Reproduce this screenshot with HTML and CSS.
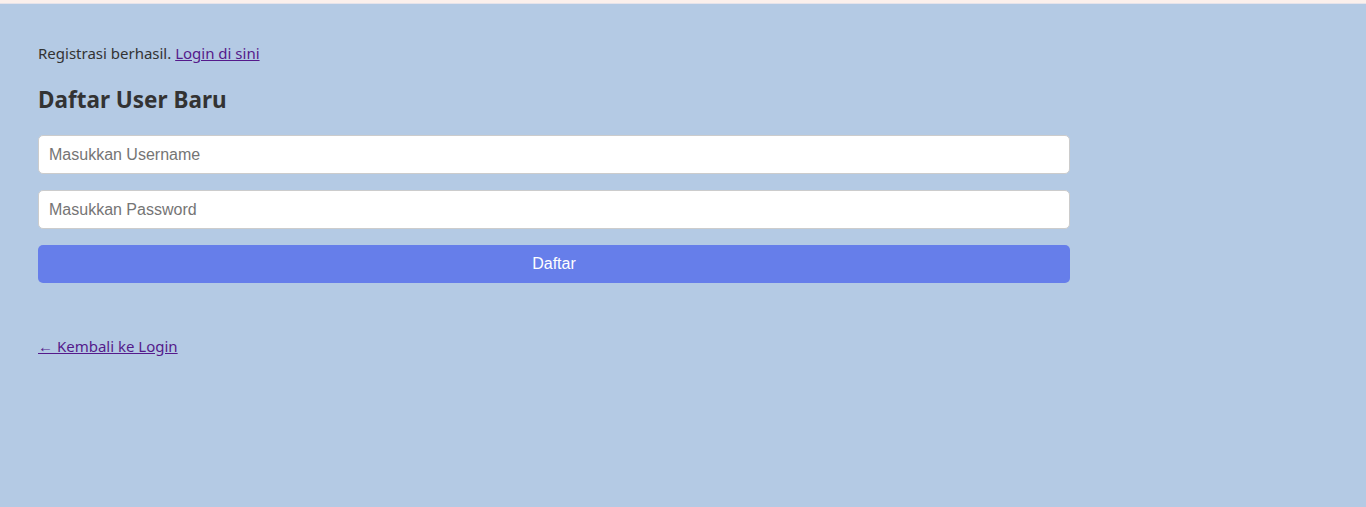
FILE: index.html
```html
<!DOCTYPE html>
<html lang="id">
<head>
<meta charset="utf-8">
<title>Daftar User Baru</title>
<link rel="stylesheet" href="styles.css">
</head>
<body>
<div class="strip"></div>
<main class="page">
  <p class="notice">Registrasi berhasil. <a href="#" class="visited">Login di sini</a></p>
  <h2 class="title">Daftar User Baru</h2>
  <form class="form">
    <input class="field" type="text" placeholder="Masukkan Username">
    <input class="field" type="password" placeholder="Masukkan Password">
    <button class="submit" type="button">Daftar</button>
  </form>
  <a href="#" class="visited back">← Kembali ke Login</a>
</main>
</body>
</html>
```
FILE: styles.css
```css
html, body {
  margin: 0;
  padding: 0;
  height: 100%;
}
body {
  background: #b4cae4;
  font-family: "Noto Sans", "Open Sans", sans-serif;
  color: #333333;
}
.strip {
  height: 3px;
  background: #fbf0ec;
  border-bottom: 1px solid #e6e3ea;
}
.page {
  padding: 39px 38px 0;
}
.notice {
  margin: 0;
  font-size: 15px;
  line-height: 20px;
}
.visited {
  color: #551a8b;
}
.title {
  margin: 23px 0 21px;
  font-size: 22.5px;
  line-height: 28px;
  font-weight: 700;
}
.form {
  width: 80%;
  display: flex;
  flex-direction: column;
}
.field {
  box-sizing: border-box;
  height: 39px;
  padding: 0 10px;
  border: 1px solid #cccccc;
  border-radius: 5px;
  background: #ffffff;
  font-family: "Liberation Sans", Arial, sans-serif;
  font-size: 16px;
  color: #333;
  margin-bottom: 16px;
}
.field::placeholder {
  color: #757575;
}
.submit {
  box-sizing: border-box;
  height: 38px;
  border: none;
  border-radius: 5px;
  background: #667eea;
  color: #ffffff;
  font-family: "Liberation Sans", Arial, sans-serif;
  font-size: 16px;
}
.back {
  display: inline-block;
  margin-top: 53px;
  font-size: 15px;
  line-height: 20px;
}
```
